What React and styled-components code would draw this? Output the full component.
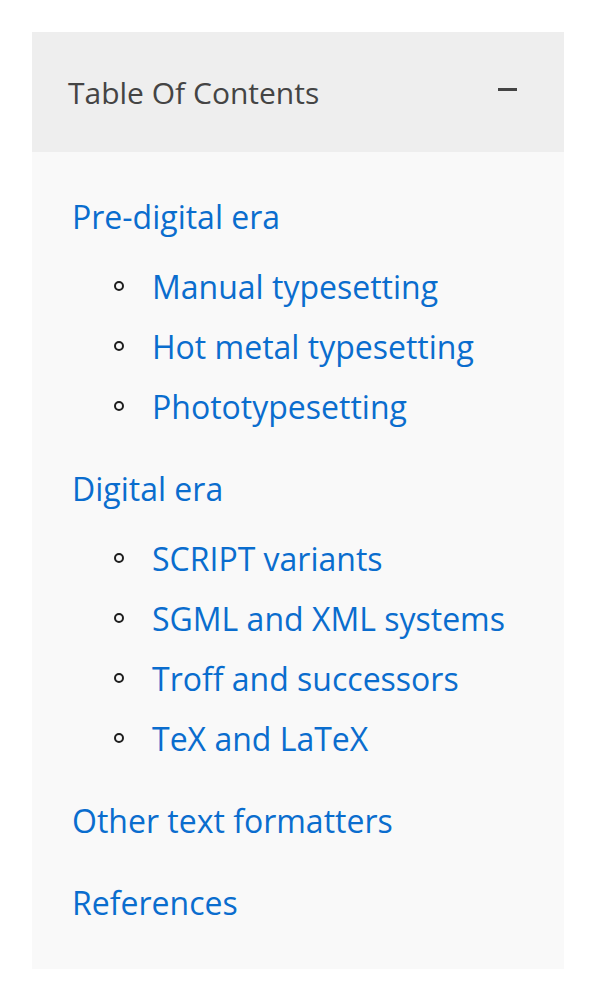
import React, { useState } from "react";
import styled, { createGlobalStyle } from "styled-components";

const GlobalStyle = createGlobalStyle`
  body {
    margin: 0;
    background: #ffffff;
    font-family: "Open Sans", "Noto Sans", sans-serif;
  }
`;

const Page = styled.div`
  padding: 32px;
  box-sizing: border-box;
  width: 596px;
`;

const Panel = styled.nav`
  display: flex;
  flex-direction: column;
  width: 532px;
`;

const Header = styled.div`
  display: flex;
  align-items: center;
  justify-content: space-between;
  height: 120px;
  padding: 0 47px 0 36px;
  box-sizing: border-box;
  background: #eeeeee;
  color: #444444;
  font-size: 30px;
  cursor: pointer;
`;

const Toggle = styled.span`
  display: block;
  width: 19px;
  height: 3px;
  background: #444444;
  margin-top: -6px;
`;

const Body = styled.div`
  background: #f9f9f9;
  padding: 35px 40px 36px 40px;
`;

const TopList = styled.ul`
  list-style: none;
  margin: 0;
  padding: 0;
  display: flex;
  flex-direction: column;
  gap: 22px;
`;

const SubList = styled.ul`
  list-style: none;
  margin: 10px 0 0 0;
  padding: 0 0 0 80px;
`;

const Item = styled.li`
  font-size: 32px;
  line-height: 60px;
`;

const SubItem = styled.li`
  position: relative;
  font-size: 32px;
  line-height: 60px;

  &::before {
    content: "";
    position: absolute;
    left: -38px;
    top: 24px;
    width: 6px;
    height: 6px;
    border: 2px solid #1e1e1e;
    border-radius: 50%;
  }
`;

const Link = styled.a`
  color: #0a6dce;
  text-decoration: none;
`;

const sections = [
  {
    title: "Pre-digital era",
    children: [
      "Manual typesetting",
      "Hot metal typesetting",
      "Phototypesetting",
    ],
  },
  {
    title: "Digital era",
    children: [
      "SCRIPT variants",
      "SGML and XML systems",
      "Troff and successors",
      "TeX and LaTeX",
    ],
  },
  { title: "Other text formatters", children: [] },
  { title: "References", children: [] },
];

export default function App() {
  const [open, setOpen] = useState(true);

  return (
    <Page>
      <GlobalStyle />
      <Panel>
        <Header onClick={() => setOpen((prev) => !prev)}>
          <span>Table Of Contents</span>
          <Toggle />
        </Header>
        {open && (
          <Body>
            <TopList>
              {sections.map((section) => (
                <Item key={section.title}>
                  <Link href="#">{section.title}</Link>
                  {section.children.length > 0 && (
                    <SubList>
                      {section.children.map((child) => (
                        <SubItem key={child}>
                          <Link href="#">{child}</Link>
                        </SubItem>
                      ))}
                    </SubList>
                  )}
                </Item>
              ))}
            </TopList>
          </Body>
        )}
      </Panel>
    </Page>
  );
}
